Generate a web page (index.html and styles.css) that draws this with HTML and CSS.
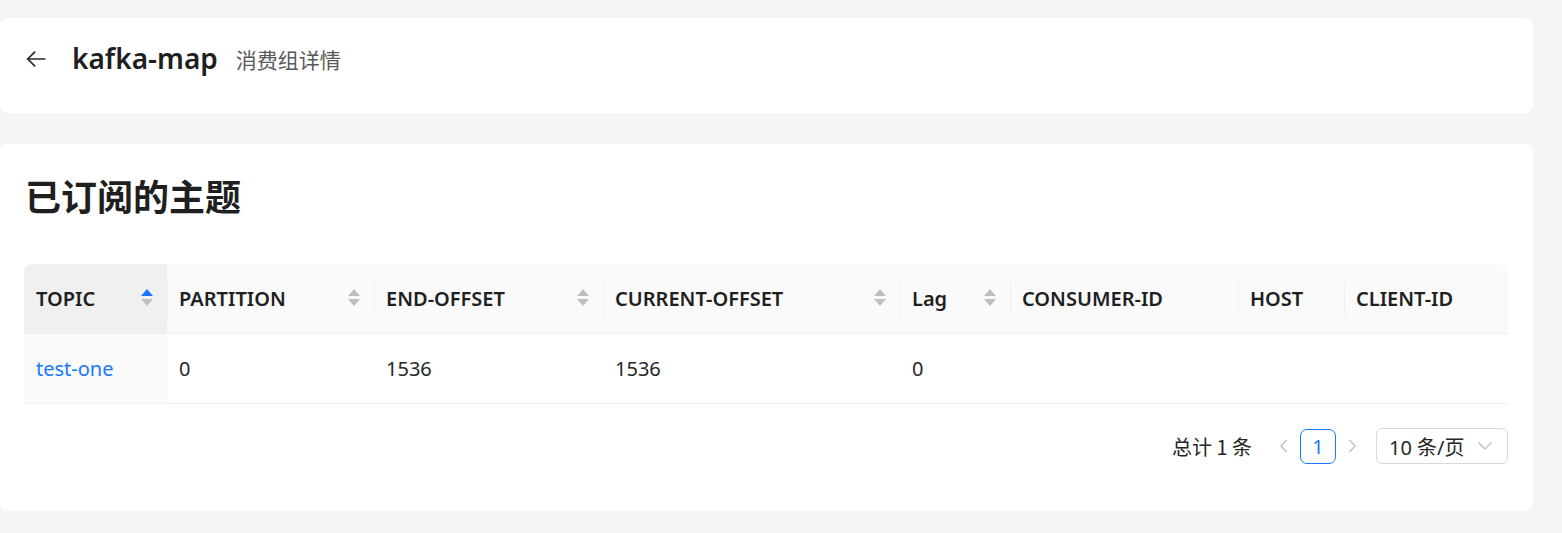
FILE: index.html
```html
<!DOCTYPE html>
<html lang="zh">
<head>
<meta charset="utf-8">
<title>kafka-map 消费组详情</title>
<link rel="stylesheet" href="styles.css">
</head>
<body>
<div class="page">
  <header class="card page-header">
    <span class="back" aria-label="返回">
      <svg width="22" height="22" viewBox="0 0 24 24" fill="none" stroke="#262626" stroke-width="1.9" stroke-linecap="round" stroke-linejoin="round"><path d="M21.5 12H3"/><path d="M10.5 4.5 3 12l7.5 7.5"/></svg>
    </span>
    <span class="app-title">kafka-map</span>
    <span class="sub-title">消费组详情</span>
  </header>

  <section class="card content">
    <h2 class="heading">已订阅的主题</h2>
    <table class="table">
      <colgroup>
        <col style="width:143px"><col style="width:207px"><col style="width:229px"><col style="width:297px"><col style="width:110px"><col style="width:228px"><col style="width:106px"><col style="width:164px">
      </colgroup>
      <thead>
        <tr>
          <th class="sorted"><div class="th-inner"><span>TOPIC</span><span class="sorter"><i class="up active"></i><i class="down"></i></span></div></th>
          <th><div class="th-inner"><span>PARTITION</span><span class="sorter"><i class="up"></i><i class="down"></i></span></div></th>
          <th><div class="th-inner"><span>END-OFFSET</span><span class="sorter"><i class="up"></i><i class="down"></i></span></div></th>
          <th><div class="th-inner"><span>CURRENT-OFFSET</span><span class="sorter"><i class="up"></i><i class="down"></i></span></div></th>
          <th><div class="th-inner"><span>Lag</span><span class="sorter"><i class="up"></i><i class="down"></i></span></div></th>
          <th><div class="th-inner"><span>CONSUMER-ID</span></div></th>
          <th><div class="th-inner"><span>HOST</span></div></th>
          <th class="last"><div class="th-inner"><span>CLIENT-ID</span></div></th>
        </tr>
      </thead>
      <tbody>
        <tr>
          <td class="sorted"><a class="link" href="#">test-one</a></td>
          <td>0</td>
          <td>1536</td>
          <td>1536</td>
          <td>0</td>
          <td></td>
          <td></td>
          <td></td>
        </tr>
      </tbody>
    </table>
    <div class="pagination">
      <span class="total">总计 1 条</span>
      <span class="pg-arrow disabled"><svg width="12" height="16" viewBox="0 0 12 16" fill="none" stroke="#bfbfbf" stroke-width="1.4"><path d="M8.5 2 3 8l5.5 6"/></svg></span>
      <span class="pg-item active">1</span>
      <span class="pg-arrow disabled"><svg width="12" height="16" viewBox="0 0 12 16" fill="none" stroke="#bfbfbf" stroke-width="1.4"><path d="M3.5 2 9 8l-5.5 6"/></svg></span>
      <span class="pg-select">10 条/页<svg width="16" height="10" viewBox="0 0 16 10" fill="none" stroke="#bfbfbf" stroke-width="1.4"><path d="M1.5 1.5 8 8l6.5-6.5"/></svg></span>
    </div>
  </section>
</div>
</body>
</html>
```
FILE: styles.css
```css
* { box-sizing: border-box; }
html, body { margin: 0; padding: 0; }
body {
  background: #f5f5f5;
  font-family: "Noto Sans", "Noto Sans CJK SC", sans-serif;
  color: rgba(0,0,0,0.88);
  width: 1562px;
  height: 533px;
  overflow: hidden;
}
.page {
  padding-top: 18px;
  width: 1533px;
  display: flex;
  flex-direction: column;
  gap: 31px;
}
.card {
  background: #fff;
  border-radius: 8px;
}
.page-header {
  height: 95px;
  display: flex;
  align-items: center;
  padding: 0 24px 14px 25px;
}
.back {
  display: flex;
  width: 22px;
  height: 22px;
  margin-right: 25px;
  margin-top: 1px;
}
.app-title {
  font-size: 28px;
  font-weight: 600;
  color: #1f1f1f;
  margin-right: 18px;
  margin-top: -2px;
}
.sub-title {
  font-size: 21px;
  color: #595959;
  font-family: "Noto Sans CJK SC", sans-serif;
}
.content {
  height: 367px;
  padding: 24px 24px 0 24px;
}
.heading {
  margin: 0;
  font-family: "Noto Sans CJK SC", sans-serif;
  font-size: 36px;
  font-weight: 700;
  color: #1f1f1f;
  height: 54px;
  line-height: 54px;
  margin-left: 1px;
}
.table {
  margin-top: 42px;
  width: 1484px;
  border-collapse: separate;
  border-spacing: 0;
  table-layout: fixed;
  font-size: 20px;
}
.table th {
  background: #fafafa;
  text-align: left;
  font-weight: 600;
  height: 70px;
  padding: 0 14px 0 12px;
  border-bottom: 1px solid #f0f0f0;
  position: relative;
  color: #1f1f1f;
}
.table th:first-child { border-top-left-radius: 8px; }
.table th.last { border-top-right-radius: 8px; }
.table th + th::before {
  content: "";
  position: absolute;
  left: 0;
  top: 50%;
  width: 1px;
  height: 33px;
  transform: translateY(-50%);
  background: #ededed;
}
.table th.sorted { background: #f0f0f0; }
.th-inner {
  display: flex;
  align-items: center;
  justify-content: space-between;
}
.sorter {
  display: flex;
  flex-direction: column;
  gap: 3px;
  margin-top: -2px;
}
.sorter i {
  display: block;
  width: 0;
  height: 0;
  border-left: 6px solid transparent;
  border-right: 6px solid transparent;
}
.sorter .up { border-bottom: 7px solid #bfbfbf; }
.sorter .down { border-top: 7px solid #bfbfbf; }
.sorter .up.active { border-bottom-color: #1677ff; }
.table td {
  height: 70px;
  padding: 0 12px;
  border-bottom: 1px solid #f0f0f0;
  color: #262626;
}
.table td.sorted { background: #fafafa; }
.link {
  color: #1677ff;
  text-decoration: none;
}
.pagination {
  margin-top: 24px;
  display: flex;
  align-items: center;
  justify-content: flex-end;
  width: 1484px;
  font-size: 20px;
}
.total {
  font-family: "Noto Sans CJK SC", sans-serif;
  margin-right: 16px;
  color: #262626;
}
.pg-arrow {
  width: 32px;
  height: 36px;
  display: flex;
  align-items: center;
  justify-content: center;
}
.pg-item {
  width: 36px;
  height: 35px;
  border: 1px solid #1677ff;
  border-radius: 7px;
  color: #1677ff;
  display: flex;
  align-items: center;
  justify-content: center;
}
.pg-select {
  margin-left: 8px;
  width: 132px;
  height: 36px;
  border: 1px solid #d9d9d9;
  border-radius: 6px;
  display: flex;
  align-items: center;
  justify-content: space-between;
  padding: 0 14px 0 12px;
  font-family: "Noto Sans", "Noto Sans CJK SC", sans-serif;
  color: #262626;
}
```
